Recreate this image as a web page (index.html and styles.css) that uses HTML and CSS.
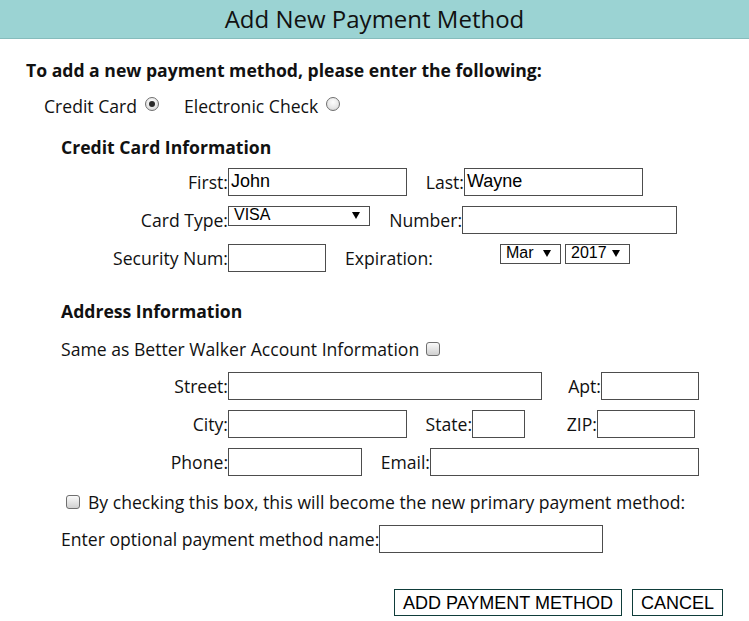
FILE: index.html
```html
<!DOCTYPE html>
<html>
<head>
<meta charset="utf-8">
<title>Add New Payment Method</title>
<link rel="stylesheet" href="styles.css">
</head>
<body>
<div class="header"><h1 class="title">Add New Payment Method</h1></div>
<div class="content">
  <p class="intro">To add a new payment method, please enter the following:</p>
  <div class="method-row">
    <label class="method">Credit Card <span class="radio checked"></span></label>
    <label class="method">Electronic Check <span class="radio"></span></label>
  </div>

  <h2 class="section cc-title">Credit Card Information</h2>
  <div class="fields">
    <div class="row">
      <span class="lbl first-col">First:</span>
      <span class="input w179">John</span>
      <span class="lbl lbl-last">Last:</span>
      <span class="input w179">Wayne</span>
    </div>
    <div class="row">
      <span class="lbl first-col">Card Type:</span>
      <span class="select w142"><span>VISA</span><svg class="arrow" viewBox="0 0 8 7" width="8" height="7"><path d="M0 0H8L4 7Z"/></svg></span>
      <span class="lbl lbl-number">Number:</span>
      <span class="input w215"></span>
    </div>
    <div class="row">
      <span class="lbl first-col">Security Num:</span>
      <span class="input w98"></span>
      <span class="lbl lbl-exp">Expiration:</span>
      <span class="select w61"><span>Mar</span><svg class="arrow" viewBox="0 0 8 7" width="8" height="7"><path d="M0 0H8L4 7Z"/></svg></span>
      <span class="select w65 sel-year"><span>2017</span><svg class="arrow" viewBox="0 0 8 7" width="8" height="7"><path d="M0 0H8L4 7Z"/></svg></span>
    </div>
  </div>

  <h2 class="section addr-title">Address Information</h2>
  <div class="same-as">Same as Better Walker Account Information <span class="checkbox"></span></div>
  <div class="fields addr-fields">
    <div class="row">
      <span class="lbl first-col">Street:</span>
      <span class="input w314"></span>
      <span class="lbl lbl-apt">Apt:</span>
      <span class="input w98"></span>
    </div>
    <div class="row">
      <span class="lbl first-col">City:</span>
      <span class="input w179"></span>
      <span class="lbl lbl-state">State:</span>
      <span class="input w53"></span>
      <span class="lbl lbl-zip">ZIP:</span>
      <span class="input w98"></span>
    </div>
    <div class="row">
      <span class="lbl first-col">Phone:</span>
      <span class="input w134"></span>
      <span class="lbl lbl-email">Email:</span>
      <span class="input w269"></span>
    </div>
  </div>

  <div class="primary"><span class="checkbox"></span> By checking this box, this will become the new primary payment method:</div>
  <div class="optional">
    <span class="lbl">Enter optional payment method name:</span>
    <span class="input w224"></span>
  </div>

  <div class="actions">
    <button class="btn">ADD PAYMENT METHOD</button>
    <button class="btn">CANCEL</button>
  </div>
</div>
</body>
</html>
```

FILE: styles.css
```css
* { box-sizing: border-box; }
html, body { margin: 0; padding: 0; background: #fff; }
body {
  font-family: "Open Sans", "DejaVu Sans", sans-serif;
  font-size: 17.6px;
  color: #111;
  width: 749px;
  height: 621px;
  overflow: hidden;
}
.header {
  height: 39px;
  background: #9bd3d3;
  border-bottom: 1px solid #86bcbc;
  display: flex;
  align-items: center;
  justify-content: center;
}
.title {
  margin: 0;
  font-weight: 400;
  font-size: 24px;
  line-height: 30px;
  color: #111;
}
.content {
  padding: 0 26px;
  display: flex;
  flex-direction: column;
}
.intro {
  margin: 20px 0 0;
  font-weight: 700;
  font-size: 17.6px;
  line-height: 22px;
}
.method-row {
  margin: 14px 0 0 18px;
  display: flex;
  gap: 25px;
  line-height: 22px;
}
.method { display: flex; align-items: center; gap: 8px; }
.radio {
  width: 14px;
  height: 14px;
  border-radius: 50%;
  border: 1px solid #6f6f6f;
  background: radial-gradient(circle at 50% 35%, #fdfdfd 0%, #e6e6e6 60%, #c8c8c8 100%);
  display: inline-flex;
  align-items: center;
  justify-content: center;
  margin-top: -5px;
}
.radio.checked::after {
  content: "";
  width: 6px;
  height: 6px;
  border-radius: 50%;
  background: #2a2a2a;
}
.section {
  margin: 0 0 0 35px;
  font-size: 17.6px;
  font-weight: 700;
  line-height: 22px;
}
.cc-title { margin-top: 19px; }
.addr-title { margin-top: 28px; }
.fields {
  display: flex;
  flex-direction: column;
  gap: 10px;
  margin-top: 10px;
}
.addr-fields { margin-top: 12px; }
.row {
  display: flex;
  align-items: center;
  height: 28px;
}
.lbl { line-height: 22px; white-space: nowrap; }
.first-col { width: 202px; text-align: right; }
.lbl-last { width: 57px; text-align: right; }
.lbl-number { width: 92px; text-align: right; }
.lbl-exp { width: 174px; padding-left: 19px; }
.lbl-apt { width: 59px; text-align: right; }
.lbl-state { width: 65px; text-align: right; }
.lbl-zip { width: 72px; text-align: right; }
.lbl-email { width: 68px; text-align: right; }
.input {
  height: 28px;
  border: 1px solid #4d4d4d;
  background: #fff;
  font-family: "Liberation Sans", Arial, sans-serif;
  font-size: 18px;
  line-height: 24px;
  padding: 0 2px;
  color: #000;
}
.select {
  align-self: flex-start;
  height: 20px;
  border: 1px solid #4d4d4d;
  background: #fff;
  font-family: "Liberation Sans", Arial, sans-serif;
  font-size: 16px;
  line-height: 16px;
  color: #000;
  display: flex;
  align-items: flex-start;
  justify-content: space-between;
  padding: 0 9px 0 5px;
}
.arrow { margin-top: 5px; fill: #000; }
.sel-year { margin-left: 4px; }
.w53 { width: 53px; }
.w61 { width: 61px; }
.w65 { width: 65px; }
.w98 { width: 98px; }
.w134 { width: 134px; }
.w142 { width: 142px; }
.w179 { width: 179px; }
.w215 { width: 215px; }
.w224 { width: 224px; }
.w269 { width: 269px; }
.w314 { width: 314px; }
.same-as {
  margin: 16px 0 0 35px;
  line-height: 22px;
  display: flex;
  align-items: center;
  gap: 7px;
}
.checkbox {
  width: 14px;
  height: 14px;
  border: 1px solid #6f6f6f;
  border-radius: 3px;
  background: linear-gradient(#fafafa, #d0d0d0);
  display: inline-block;
}
.primary {
  margin: 15px 0 0 40px;
  line-height: 22px;
  display: flex;
  align-items: center;
  gap: 8px;
}
.optional {
  margin: 12px 0 0 35px;
  display: flex;
  align-items: center;
}
.actions {
  margin-top: 36px;
  display: flex;
  justify-content: flex-end;
  gap: 10px;
}
.btn {
  height: 27px;
  border: 1px solid #0f3d3a;
  background: #fff;
  font-family: "Liberation Sans", Arial, sans-serif;
  font-size: 18px;
  line-height: 24px;
  padding: 0 8px;
  color: #000;
  border-radius: 0;
}
```
